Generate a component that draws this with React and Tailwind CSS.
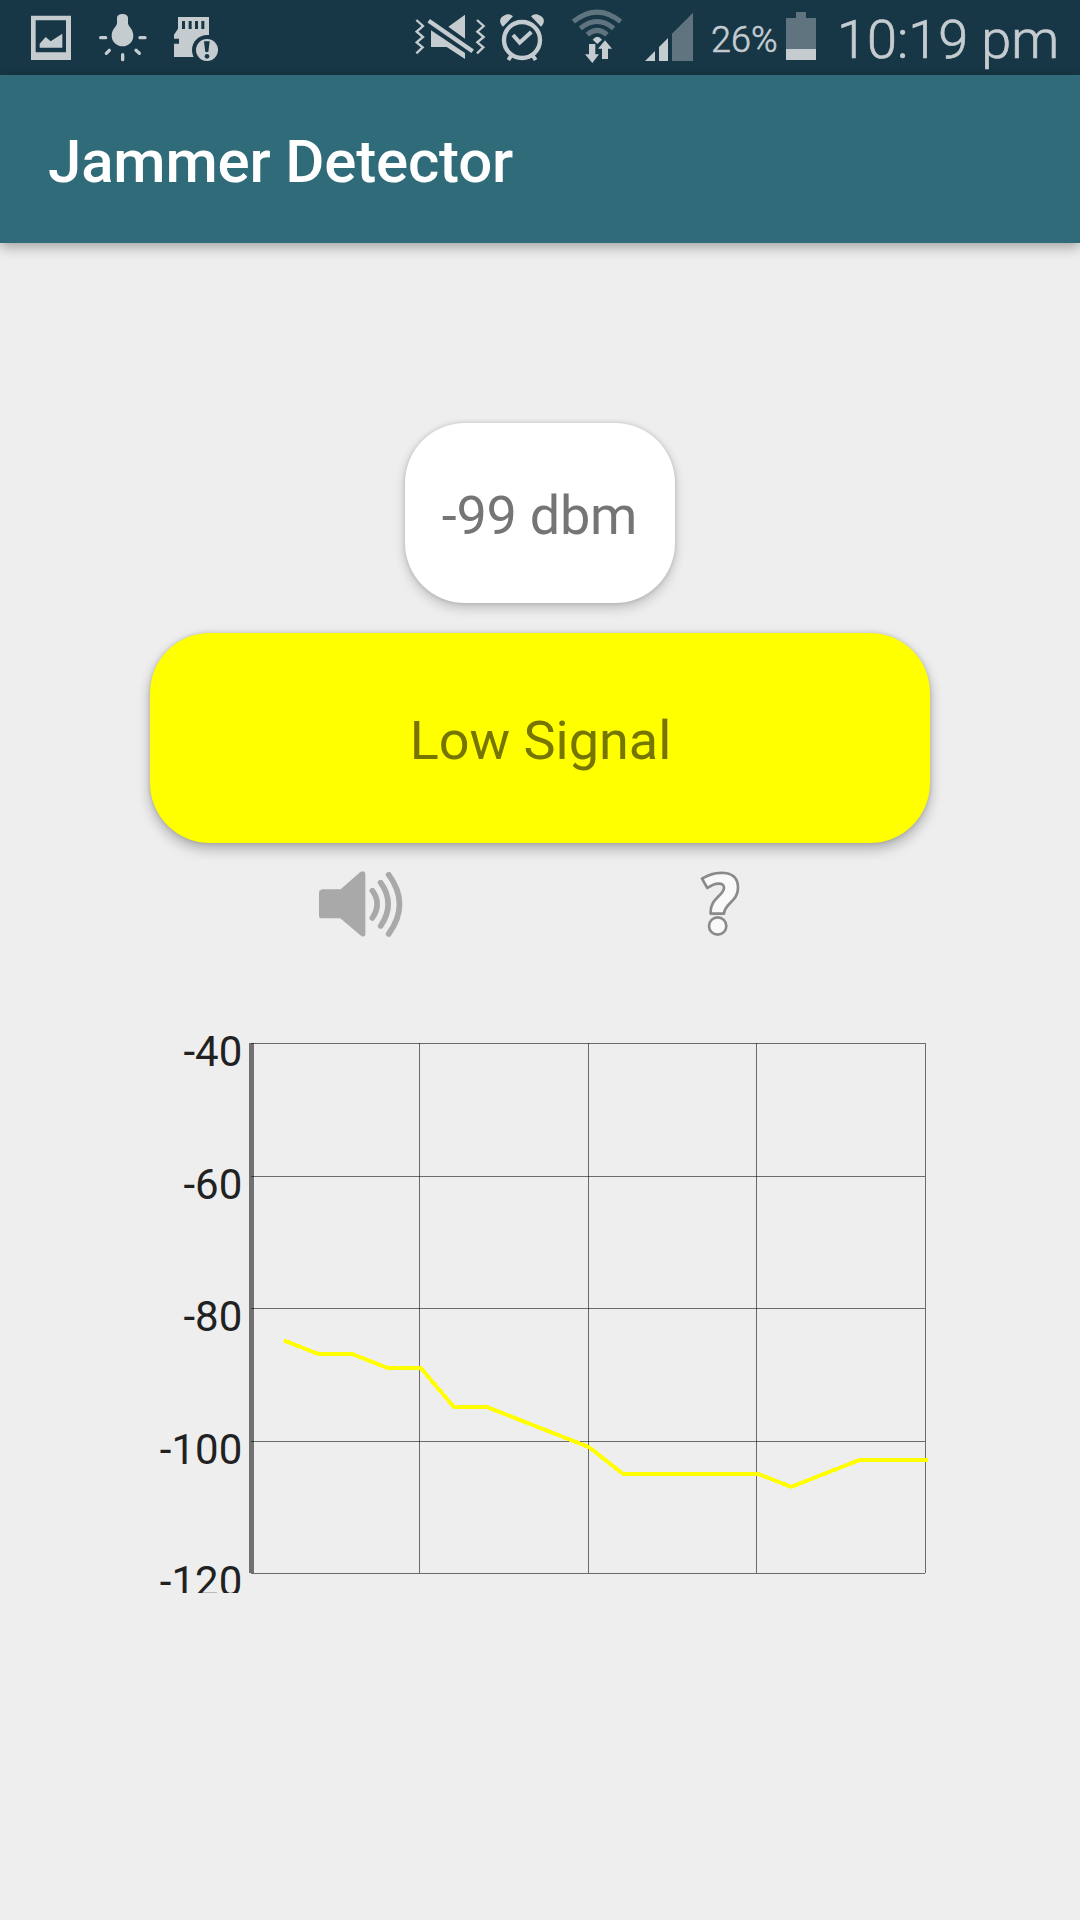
import React from 'react';

// signal level per sample, in dBm
const samples = [-85, -87, -87, -89, -89, -95, -95, -97, -99, -101, -105, -105, -105, -105, -105, -107, -105, -103, -103, -103];
const yLabels = [-40, -60, -80, -100, -120];

const ImageIcon = () => (
  <svg className="h-[75px] w-10" viewBox="93 0 120 225" fill="#c5ccd0">
    <path fillRule="evenodd" d="M93 47h120v133H93z M107 61v96h91V61z" />
    <path d="M119 143v-12l18-20 15 13 35-23v42z" />
  </svg>
);

const BulbIcon = () => (
  <svg className="ml-7 h-[75px] w-12" viewBox="297 0 144 225" fill="#c5ccd0">
    <path d="M351 54c0-16 33-16 33 0v16c0 8 16 18 16 37 0 18-14 32-32 32s-33-14-33-32c0-19 16-29 16-37z" />
    <g stroke="#c5ccd0" strokeWidth="10" strokeLinecap="round">
      <path d="M302 113h15M420 113h15M328 151l-9 9M408 151l10 9M368 164v15" />
    </g>
  </svg>
);

const SdCardIcon = () => (
  <svg className="ml-[27px] h-[75px] w-[45px]" viewBox="522 0 135 225" fill="#c5ccd0">
    <path
      fillRule="evenodd"
      d="M534 51h93v54c-28-3-51 18-51 45 0 7 2 15 5 21h-59v-40h15v-15h-15v-12l12-18z M546 63v24h9V63z M566 63v24h9V63z M585 63v24h9V63z M604 63v24h9V63z"
    />
    <circle cx="621" cy="150" r="33" />
    <path d="M612 124h17l-4 32h-9z" fill="#173746" />
    <circle cx="621" cy="169" r="7" fill="#173746" />
  </svg>
);

const MuteIcon = () => (
  <svg className="h-[75px] w-[71px]" viewBox="45 0 213 225" fill="#c5ccd0">
    <path d="M195 44v72l-50-36zM93 91l102 68v18l-55-36H93z" />
    <path d="M86 62l132 92" stroke="#c5ccd0" strokeWidth="13" />
    <path
      d="M49 60l20 18-19 17 19 16-19 16 18 15-19 18M231 60l20 18-19 17 19 16-19 16 18 15-19 18"
      fill="none"
      stroke="#c5ccd0"
      strokeWidth="7"
    />
  </svg>
);

const AlarmIcon = () => (
  <svg className="ml-3.5 h-[75px] w-11" viewBox="300 0 132 225" fill="none" stroke="#c5ccd0">
    <circle cx="366" cy="120" r="54" strokeWidth="13" />
    <path d="M339 105l20 23 35-32" strokeWidth="12" />
    <path d="M333 168l-8 12M399 168l8 12" strokeWidth="12" />
    <path d="M309 80c-14-14-9-27 1-32 11-7 21-7 29 1zM423 80c14-14 9-27-1-32-11-7-21-7-29 1z" fill="#c5ccd0" stroke="none" />
  </svg>
);

const WifiIcon = () => (
  <svg className="ml-7 h-[75px] w-[50px]" viewBox="516 0 150 225" fill="none">
    <g stroke="#5f747e" strokeWidth="15">
      <path d="M520 65Q591 8 662 65" />
      <path d="M541 85Q591 44 641 85" />
      <path d="M562 104Q591 78 621 104" />
    </g>
    <g fill="#c5ccd0">
      <path d="M578 119q14-17 28 0l-14 13z" />
      <path d="M567 132h19v31h11l-20 26-22-26h12z" />
      <path d="M606 177v-31h-12l21-25 21 25h-12v31z" />
    </g>
  </svg>
);

const SignalIcon = () => (
  <svg className="ml-[23px] h-[75px] w-12" viewBox="75 0 144 225" fill="#c5ccd0">
    <path d="M75 183l30-30v30zM117 183v-42l27-27v69z" />
    <path d="M156 183v-82l63-63v145z" fill="#5f747e" />
  </svg>
);

const BatteryIcon = () => (
  <svg className="h-[75px] w-[30px]" viewBox="498 0 90 225">
    <path d="M528 36h30v18h30v93h-90V54h30z" fill="#5f747e" />
    <path d="M498 147h90v33h-90z" fill="#c5ccd0" />
  </svg>
);

const StatusBar = () => (
  <div className="flex h-[75px] items-center justify-between bg-[#173746] pl-[31px] pr-[22px] text-[#c5ccd0]">
    <div className="flex">
      <ImageIcon />
      <BulbIcon />
      <SdCardIcon />
    </div>
    <div className="flex items-center">
      <MuteIcon />
      <AlarmIcon />
      <WifiIcon />
      <SignalIcon />
      <span className="ml-[18px] w-[75px] whitespace-nowrap pt-1 text-[36px] font-light leading-none [-webkit-text-stroke:0.6px_#c5ccd0]">26%</span>
      <BatteryIcon />
      <span className="ml-[21px] w-[221px] whitespace-nowrap pt-1 text-[54px] font-light leading-none [-webkit-text-stroke:0.7px_#c5ccd0]">10:19 pm</span>
    </div>
  </div>
);

const SpeakerIcon = () => (
  <svg className="h-[66px] w-[84px]" viewBox="57 62 252 198" fill="#a9a9a9">
    <path d="M64 117h58l58-51c8-6 16-2 16 6v180c0 8-9 9-15 3l-60-51H64q-7 0-7-7v-71q0-7 7-7z" />
    <path
      d="M217 121Q246 160 217 203M242 97Q287 160 242 227M266 73Q331 162 266 251"
      fill="none"
      stroke="#a9a9a9"
      strokeWidth="17"
      strokeLinecap="round"
    />
  </svg>
);

const HelpIcon = () => (
  <svg className="h-[66px] w-10" viewBox="61 62 120 198" fill="#f9f9f9" stroke="#8a8a8a" strokeWidth="8" strokeLinejoin="round">
    <path d="M67 85C105 61 175 55 175 112c0 43-40 45-42 78H93c-3-47 40-54 40-78 0-17-26-16-50 1z" />
    <circle cx="114" cy="227" r="26" />
  </svg>
);

const SignalChart = () => {
  const points = samples.map((v, i) => `${3 + (i + 1) * 33.7},${(-40 - v) * 6.625}`).join(' ');

  return (
    <div className="mx-auto mt-[86px] flex h-[570px] w-[780px] overflow-hidden pt-5">
      <div className="flex w-[92.5px] flex-col text-right text-[42px] tracking-[0.1px] text-[#212121]">
        {yLabels.map((label) => (
          <div key={label} className="h-[132.5px] shrink-0 leading-[17px]">{label}</div>
        ))}
      </div>
      <svg className="ml-[6.5px] h-[531px] w-[680px] overflow-visible" viewBox="0 0 680 531" shapeRendering="crispEdges">
        <rect x="0" y="0" width="5" height="530" fill="#707070" />
        <g fill="#000" fillOpacity="0.55">
          {[0, 133, 265, 398, 530].map((y) => (
            <rect key={y} x="2" y={y} width="674" height="1" />
          ))}
          {[170, 339, 507, 676].map((x) => (
            <rect key={x} x={x} y="0" width="1" height="530" />
          ))}
        </g>
        <polyline points={points} fill="none" stroke="#ffff00" strokeWidth="4" strokeLinecap="square" />
      </svg>
    </div>
  );
};

const App = () => {
  return (
    <div className="h-[1920px] w-[1080px] overflow-hidden bg-[#eeeeee] font-['Roboto',sans-serif]">
      <StatusBar />

      <header className="flex h-[168px] items-center bg-[#306b79] pl-12 pt-1.5 shadow-[0_4px_12px_rgba(0,0,0,0.32)]">
        <h1 className="text-[60px] font-medium leading-none tracking-[-0.18px] text-white">Jammer Detector</h1>
      </header>

      <main className="flex flex-col items-center pt-[180px]">
        <div className="flex h-[180px] w-[270px] items-center justify-center rounded-[60px] bg-white pr-px pt-1 text-[54px] tracking-[-0.25px] text-[#757575] shadow-[0_5px_12px_rgba(0,0,0,0.2),0_0_4px_rgba(0,0,0,0.15)]">
          -99 dbm
        </div>
        <div className="mt-[30px] flex h-[210px] w-[780px] items-center justify-center rounded-[60px] bg-[#ffff00] pl-px pt-1 text-[54px] text-[#757500] shadow-[0_6px_13px_rgba(0,0,0,0.28),0_0_4px_rgba(0,0,0,0.15)]">
          Low Signal
        </div>

        {/* Sound and help buttons */}
        <div className="mt-7 flex w-full pl-[319px]">
          <SpeakerIcon />
          <div className="ml-[297px]">
            <HelpIcon />
          </div>
        </div>

        <SignalChart />
      </main>
    </div>
  );
};

export default App;
